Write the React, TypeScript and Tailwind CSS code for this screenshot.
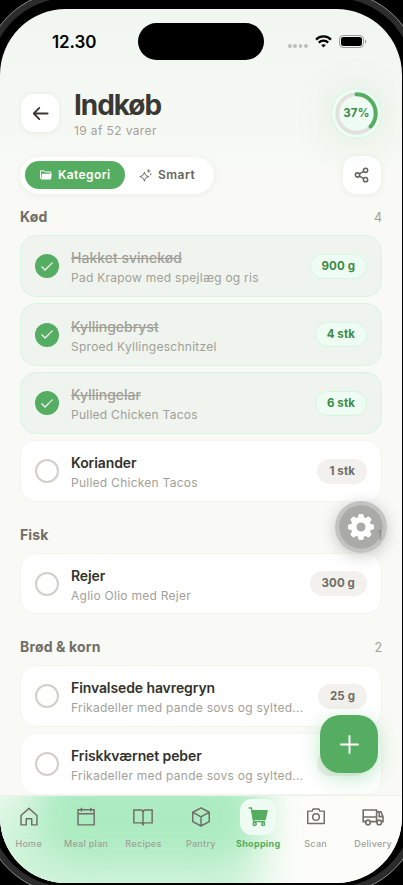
import type { ReactNode } from 'react';

type Item = { name: string; recipe: string; amount: string; done?: boolean };
type Group = { title: string; count: number; items: Item[] };

const GROUPS: Group[] = [
  {
    title: 'Kød',
    count: 4,
    items: [
      { name: 'Hakket svinekød', recipe: 'Pad Krapow med spejlæg og ris', amount: '900 g', done: true },
      { name: 'Kyllingebryst', recipe: 'Sproed Kyllingeschnitzel', amount: '4 stk', done: true },
      { name: 'Kyllingelar', recipe: 'Pulled Chicken Tacos', amount: '6 stk', done: true },
      { name: 'Koriander', recipe: 'Pulled Chicken Tacos', amount: '1 stk' },
    ],
  },
  {
    title: 'Fisk',
    count: 1,
    items: [{ name: 'Rejer', recipe: 'Aglio Olio med Rejer', amount: '300 g' }],
  },
  {
    title: 'Brød & korn',
    count: 2,
    items: [
      { name: 'Finvalsede havregryn', recipe: 'Frikadeller med pande sovs og sylted...', amount: '25 g' },
      { name: 'Friskkværnet peber', recipe: 'Frikadeller med pande sovs og sylted...', amount: '' },
    ],
  },
];

function Stroke({ size, width = 1.5, children }: { size: number; width?: number; children: ReactNode }) {
  return (
    <svg width={size} height={size} viewBox="0 0 24 24" fill="none" stroke="currentColor" strokeWidth={width}>
      {children}
    </svg>
  );
}

const NAV: { label: string; icon: ReactNode; active?: boolean }[] = [
  {
    label: 'Home',
    icon: (
      <Stroke size={22} width={1.6}>
        <path d="M3.3 20.6V10.4L12 2.6 20.7 10.4V20.6H15V14H9V20.6Z" strokeLinejoin="round" />
      </Stroke>
    ),
  },
  {
    label: 'Meal plan',
    icon: (
      <Stroke size={22} width={1.6}>
        <path d="M3.3 4.2H20.9V20.6H3.3ZM3.3 8.4H20.9M7 1.8V6M17.2 1.8V6" />
      </Stroke>
    ),
  },
  {
    label: 'Recipes',
    icon: (
      <Stroke size={22} width={1.6}>
        <path d="M12 7C12 5.2 11.2 4.4 9.4 4.4H2V18.4H9.8C11.2 18.4 12 19.2 12 21.4C12 19.2 12.8 18.4 14.2 18.4H22V4.4H14.6C12.8 4.4 12 5.2 12 7ZM12 7V21.4" />
      </Stroke>
    ),
  },
  {
    label: 'Pantry',
    icon: (
      <Stroke size={22} width={1.6}>
        <path d="M12 2 21 6.8V17L12 21.8 3 17V6.8ZM3 6.8 12 11.8 21 6.8M12 11.8V21.8" strokeLinejoin="round" />
      </Stroke>
    ),
  },
  {
    label: 'Shopping',
    active: true,
    icon: (
      <Stroke size={22} width={1.6}>
        <path d="M1.8 2.2H4.8L7.4 16.8H19.6" />
        <path d="M5.4 5.2H21.8L19.8 14.6H7Z" fill="currentColor" />
        <circle cx="8.4" cy="19.6" r="1.7" />
        <circle cx="17.6" cy="19.6" r="1.7" />
      </Stroke>
    ),
  },
  {
    label: 'Scan',
    icon: (
      <Stroke size={22} width={1.6}>
        <path d="M3 5.6H7.8L8.8 3.2H15.2L16.2 5.6H21V19.2H3Z" strokeLinejoin="round" />
        <circle cx="12" cy="12" r="3.6" />
      </Stroke>
    ),
  },
  {
    label: 'Delivery',
    icon: (
      <Stroke size={24} width={1.6}>
        <path d="M4.6 16.6H2.2V5H15.6V16.6H9.4M2.2 12H15.6M15.6 6.8H20L22 11.6V16.6H21M22 11.6H18.2V7" />
        <circle cx="7" cy="17.4" r="2.3" />
        <circle cx="18.2" cy="17.4" r="2.3" />
      </Stroke>
    ),
  },
];

const GEAR_TEETH = [0, 45, 90, 135, 180, 225, 270, 315];

function Gear() {
  return (
    <svg width="28" height="28" viewBox="-14 -14 28 28">
      <g fill="currentColor">
        {GEAR_TEETH.map((angle) => (
          <path
            key={angle}
            d="M-3.6 -8 -2.5 -12.1Q-2.2 -13 -1.3 -13H1.3Q2.2 -13 2.5 -12.1L3.6 -8Z"
            transform={`rotate(${angle})`}
          />
        ))}
      </g>
      <circle r="7.2" fill="none" stroke="currentColor" strokeWidth="5.4" />
    </svg>
  );
}

function StatusBar() {
  return (
    <div className="flex h-[51px] items-start pt-[14px]">
      <span className="mt-[7px] w-[138px] pl-[52px] text-[17px] leading-[24px] font-semibold tracking-[-0.1px] text-black">
        12.30
      </span>
      <div className="h-[37px] w-[126px] rounded-full bg-black" />
      <div className="mt-[12px] flex items-center pl-[24px]">
        <div className="mt-[9px] flex gap-[1.5px]">
          {[0, 1, 2, 3].map((n) => (
            <span key={n} className="size-[3.8px] rounded-full bg-[#bdbebb]" />
          ))}
        </div>
        <svg className="ml-[7px]" width="17" height="13" viewBox="0 0 17 13" fill="none" stroke="#000" strokeWidth="2.3">
          <path d="M1 4.6C5.2.4 11.8.4 16 4.6" />
          <path d="M3.8 7.6C6.5 5 10.5 5 13.2 7.6" />
          <path d="M6.2 10.1C7.5 8.8 9.5 8.8 10.8 10.1L8.5 12.5Z" fill="#000" stroke="none" />
        </svg>
        <svg className="ml-[7px]" width="28" height="13" viewBox="0 0 28 13">
          <rect x=".5" y=".5" width="24" height="12" rx="3.6" fill="none" stroke="#9b9c99" />
          <rect x="2" y="2" width="21" height="9" rx="2.3" fill="#000" />
          <path d="M26 4.4C27.7 4.9 27.7 8.1 26 8.6Z" fill="#9b9c99" />
        </svg>
      </div>
    </div>
  );
}

function Header() {
  return (
    <header className="flex h-[52px] items-center pr-[20px] pl-[21px]">
      <button className="flex size-[38px] items-center justify-center rounded-[13px] bg-white text-[#3a3833] shadow-[0_1px_6px_rgba(60,60,40,0.08)]">
        <Stroke size={19} width={2.3}>
          <path d="M21 12H3.5M10.5 5 3.5 12 10.5 19" strokeLinecap="round" strokeLinejoin="round" />
        </Stroke>
      </button>
      <div className="ml-[15px] flex-1 pt-[2px]">
        <h1 className="text-[28px] leading-[32px] font-bold tracking-[-1.05px] text-[#3a3833]">Indkøb</h1>
        <p className="mt-[1px] text-[12px] leading-[17px] tracking-[0.38px] text-[#a3a199]">19 af 52 varer</p>
      </div>
      <div className="relative flex size-[51px] items-center justify-center rounded-full border border-[#d5f7df] bg-[#effcf3] shadow-[0_4px_30px_12px_rgba(80,175,100,0.07)]">
        <svg className="absolute" width="43" height="43" viewBox="0 0 43 43" fill="none" strokeWidth="4">
          <circle cx="21.5" cy="21.5" r="19.2" stroke="#e2e1dd" />
          <circle
            cx="21.5"
            cy="21.5"
            r="19.2"
            stroke="#55ad61"
            strokeLinecap="round"
            pathLength="100"
            strokeDasharray="37 100"
            transform="rotate(-90 21.5 21.5)"
          />
        </svg>
        <span className="pt-px text-[11.5px] font-bold tracking-[0.3px] text-[#3d8b49]">37%</span>
      </div>
    </header>
  );
}

function Toolbar() {
  return (
    <div className="mt-[17px] flex h-[38px] items-center justify-between pr-[21px] pl-[20px]">
      <div className="flex h-[37px] w-[194px] items-center rounded-full bg-white px-[5px] text-[12px] font-semibold shadow-[0_1px_6px_rgba(60,60,40,0.08)]">
        <button className="flex h-[28px] w-[100px] items-center rounded-full bg-[#55ad61] pl-[15px] tracking-[0.38px] text-white">
          <svg width="12" height="10" viewBox="0 0 12 10" fill="none">
            <path d="M.5 8.5V.8H4.2L5.4 2H10.8V3.8" stroke="currentColor" strokeWidth="1" />
            <path d="M1.2 9.4 2 3.8H11.8L10.9 9.4Z" fill="currentColor" />
          </svg>
          <span className="ml-[6px]">Kategori</span>
        </button>
        <button className="flex items-center pl-[14px] tracking-[0.5px] text-[#65635a]">
          <Stroke size={13} width={1.8}>
            <path
              d="M10 5.5C11.2 11 12.5 12.4 18 14 12.5 15.6 11.2 17 10 22.5 8.8 17 7 15.6 1.5 14 7 12.4 8.8 11 10 5.5ZM17.8.8V6.4M15 3.6H20.6M21.6 8V11.6"
              strokeLinejoin="round"
            />
          </Stroke>
          <span className="ml-[6px]">Smart</span>
        </button>
      </div>
      <button className="flex size-[38px] items-center justify-center rounded-[13px] bg-white text-[#65635a] shadow-[0_1px_6px_rgba(60,60,40,0.08)]">
        <Stroke size={16} width={2.3}>
          <circle cx="5.3" cy="12" r="3.2" />
          <circle cx="17.3" cy="5" r="3.2" />
          <circle cx="17.3" cy="19" r="3.2" />
          <path d="M8.2 10.4 14.6 6.6M8.2 13.6 14.6 17.4" />
        </Stroke>
      </button>
    </div>
  );
}

function Card({ item }: { item: Item }) {
  return (
    <li
      className={
        item.done
          ? 'flex h-[62.25px] shrink-0 items-center rounded-[16px] border border-[#d6f6df] bg-[#eff4ee] pr-[14px] pl-[14px]'
          : 'flex h-[61.5px] shrink-0 items-center rounded-[16px] border border-[#f4f4f0] bg-white pr-[14px] pl-[14px]'
      }
    >
      {item.done ? (
        <span className="flex size-[24px] shrink-0 items-center justify-center rounded-full bg-[#55ad61] text-white">
          <svg width="12" height="9" viewBox="0 0 12 9" fill="none" stroke="currentColor" strokeWidth="1.2">
            <path d="M.8 4.8 4.1 8 11.2.9" strokeLinecap="round" strokeLinejoin="round" />
          </svg>
        </span>
      ) : (
        <span className="size-[24px] shrink-0 rounded-full border-2 border-[#d2cfca]" />
      )}
      <div className="ml-[12px] pt-[3px] whitespace-nowrap">
        <p
          className={
            item.done
              ? 'text-[14px] leading-[20px] font-medium text-[#a19f97] line-through'
              : 'text-[14px] leading-[20px] font-semibold tracking-[-0.1px] text-[#33322c]'
          }
        >
          {item.name}
        </p>
        <p className="mt-px text-[12px] leading-[18px] tracking-[0.26px] text-[#a19f97]">{item.recipe}</p>
      </div>
      <span
        className={
          item.done
            ? 'ml-auto flex h-[25px] shrink-0 items-center rounded-full border border-[#d6f6df] bg-[#effcf3] px-[11px] pt-px text-[11.5px] font-bold tracking-[0.1px] text-[#3d8b49]'
            : 'ml-auto flex h-[25px] min-w-[48.5px] shrink-0 items-center rounded-full bg-[#f2f1ed] px-[12px] pt-px text-[11.5px] font-bold tracking-[0.1px] text-[#706e66] empty:w-[50px]'
        }
      >
        {item.amount}
      </span>
    </li>
  );
}

function TabBar() {
  return (
    <nav className="absolute inset-x-0 bottom-0 h-[88px] overflow-hidden border-t border-[#efefeb] bg-[#fcfdf9]">
      <div className="absolute top-[0px] -left-[20px] h-[140px] w-[280px] bg-[#c8f2d5] opacity-85 blur-[22px]" />
      <div className="absolute -top-[40px] left-[36px] h-[106px] w-[224px] rounded-[40px] bg-[#a8eabe] opacity-90 blur-[18px]" />
      <div className="relative flex">
        {NAV.map((tab) => (
          <div key={tab.label} className="flex w-[57.4px] shrink-0 flex-col items-center pt-[3px]">
            <span
              className={
                tab.active
                  ? 'flex size-[36px] items-center justify-center rounded-[12px] bg-[#effcf3] text-[#55ad61]'
                  : 'flex size-[36px] items-center justify-center text-[#706e66]'
              }
            >
              {tab.icon}
            </span>
            <span
              className={
                tab.active
                  ? 'mt-px text-[9px] leading-[15px] font-bold tracking-[0.3px] text-[#55ad61]'
                  : 'mt-px text-[9px] leading-[15px] font-medium tracking-[0.3px] text-[#a19f97]'
              }
            >
              {tab.label}
            </span>
          </div>
        ))}
      </div>
    </nav>
  );
}

export default function App() {
  return (
    <div className="relative h-[885px] w-[403px] overflow-hidden bg-black pt-[9px] font-['Inter','Liberation_Sans',sans-serif]">
      {/* metal edge of the phone */}
      <div className="absolute -top-[9px] -left-[17px] h-[903px] w-[437px] rounded-[85px] border border-[#8a8a8a] bg-[#2c2c2c] p-[6px]">
        <div className="size-full rounded-[78px] bg-black" />
      </div>

      <main className="relative h-[874px] w-[402px] overflow-hidden rounded-[66px] bg-linear-to-b from-[#f0f6f0] via-[#f9faf5] via-20% to-[#f9faf5]">
        <StatusBar />
        <div className="pt-[27px]">
          <Header />
        </div>
        <Toolbar />
        <div className="px-[20px] pt-[12px]">
          {GROUPS.map((group) => (
            <section key={group.title} className="mb-[22px]">
              <div className="flex h-[22px] items-center justify-between">
                <h2 className="text-[14px] leading-[20px] font-bold tracking-[0.15px] text-[#706e66]">{group.title}</h2>
                <span className="pt-[2px] text-[12.5px] leading-[18px] text-[#a19f97]">{group.count}</span>
              </div>
              <ul className="mt-[7px] flex flex-col gap-[6.2px]">
                {group.items.map((item) => (
                  <Card key={item.name} item={item} />
                ))}
              </ul>
            </section>
          ))}
        </div>

        <button className="absolute top-[706px] left-[320px] flex size-[58px] items-center justify-center rounded-[20px] bg-[#55ad61] text-white shadow-[0_5px_20px_rgba(60,180,90,0.32)]">
          <svg width="19" height="19" viewBox="0 0 19 19" stroke="currentColor" strokeWidth="1.9" strokeLinecap="round">
            <path d="M9.5 1V18M1 9.5H18" />
          </svg>
        </button>
        <button className="absolute top-[492px] left-[335px] flex size-[52px] items-center justify-center rounded-full border-4 border-[#8c8c8a]/50 bg-[#80807e]/65 bg-clip-padding text-white shadow-[0_3px_16px_rgba(0,0,0,0.2)]">
          <Gear />
        </button>

        <TabBar />
      </main>
    </div>
  );
}
